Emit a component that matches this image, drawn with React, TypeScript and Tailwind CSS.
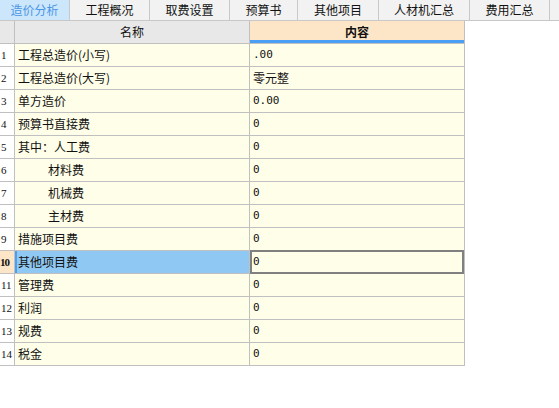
import React from "react";

const tabs = [
  { label: "造价分析", w: 70 },
  { label: "工程概况", w: 80 },
  { label: "取费设置", w: 80 },
  { label: "预算书", w: 68 },
  { label: "其他项目", w: 81 },
  { label: "人材机汇总", w: 91 },
  { label: "费用汇总", w: 80 },
];

const rows: { name: string; value: string; indent?: boolean }[] = [
  { name: "工程总造价(小写)", value: ".00" },
  { name: "工程总造价(大写)", value: "零元整" },
  { name: "单方造价", value: "0.00" },
  { name: "预算书直接费", value: "0" },
  { name: "其中：人工费", value: "0" },
  { name: "材料费", value: "0", indent: true },
  { name: "机械费", value: "0", indent: true },
  { name: "主材费", value: "0", indent: true },
  { name: "措施项目费", value: "0" },
  { name: "其他项目费", value: "0" },
  { name: "管理费", value: "0" },
  { name: "利润", value: "0" },
  { name: "规费", value: "0" },
  { name: "税金", value: "0" },
];

const SELECTED = 9;

export default function App() {
  return (
    <div
      className="w-[559px] h-[408px] bg-white text-[12px] text-[#111] overflow-hidden"
      style={{ fontFamily: '"Noto Sans CJK SC", "DejaVu Sans", sans-serif' }}
    >
      {/* tab strip */}
      <div className="flex h-[21px] bg-[#f2f2f2] border-b border-[#c8c8c8]">
        {tabs.map((t, i) => (
          <div
            key={t.label}
            style={{ width: t.w }}
            className={
              i === 0
                ? "flex items-center justify-center border-r border-[#c8c8c8] bg-[#cce6fb] text-[#4a96e6]"
                : "flex items-center justify-center border-r border-[#c8c8c8]"
            }
          >
            {t.label}
          </div>
        ))}
      </div>

      {/* grid */}
      <div className="w-[465px] border-r border-[#c0c0c0]">
        <div className="flex h-[23px] border-b border-[#c0c0c0]">
          <div className="w-[15px] bg-[#e8e8e8] border-r border-[#c0c0c0]" />
          <div className="w-[235px] bg-[#e8e8e8] border-r border-[#c0c0c0] flex items-center justify-center">
            名称
          </div>
          <div className="flex-1 bg-[#fde6c8] flex items-center justify-center font-bold border-b-[3px] border-[#4a9ff5] pt-[3px]">
            内容
          </div>
        </div>
        {rows.map((r, i) => {
          const sel = i === SELECTED;
          return (
            <div key={i} className="flex h-[23px] border-b border-[#c0c0c0]">
              <div
                className={
                  sel
                    ? "w-[15px] bg-[#fde6c8] border-r border-[#c0c0c0] flex items-center text-[11px] font-bold tracking-[-1px]"
                    : "w-[15px] bg-white border-r border-[#c0c0c0] flex items-center pl-[1px] text-[11px]"
                }
                style={{ fontFamily: '"Liberation Serif", serif' }}
              >
                {i + 1}
              </div>
              <div
                className={
                  sel
                    ? "w-[235px] bg-[#90c8f4] border-l-2 border-[#4a9ff5] border-r border-r-[#c0c0c0] flex items-center pl-[1px]"
                    : "w-[235px] bg-[#fffee8] border-r border-[#c0c0c0] flex items-center pl-[3px]"
                }
              >
                <span className={r.indent ? "pl-[30px]" : ""}>{r.name}</span>
              </div>
              <div
                className={
                  sel
                    ? "flex-1 bg-[#fffee8] border-2 border-[#808080] flex items-center pl-[1px] -mt-[1px] h-[24px]"
                    : "flex-1 bg-[#fffee8] flex items-center pl-[3px]"
                }
                style={
                  r.value === "零元整" ? undefined : { fontFamily: '"DejaVu Sans Mono", monospace', fontSize: 11 }
                }
              >
                {r.value}
              </div>
            </div>
          );
        })}
      </div>
    </div>
  );
}
